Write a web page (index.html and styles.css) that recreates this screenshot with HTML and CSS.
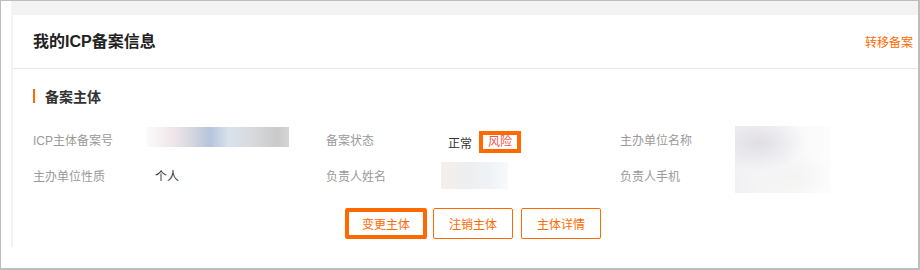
FILE: index.html
```html
<!DOCTYPE html>
<html lang="zh-CN">
<head>
<meta charset="utf-8">
<title>我的ICP备案信息</title>
<link rel="stylesheet" href="styles.css">
</head>
<body>
<div class="frame">
  <div class="panel">
    <div class="card">
      <div class="card-header">
        <h1 class="card-title">我的ICP备案信息</h1>
        <a class="header-link" href="#">转移备案</a>
      </div>
      <div class="card-body">
        <div class="section-title"><span class="section-bar"></span>备案主体</div>
        <div class="info-grid">
          <div class="label">ICP主体备案号</div>
          <div class="value"><div class="blur blur-a"></div></div>
          <div class="label">备案状态</div>
          <div class="value status"><span class="status-ok">正常</span><span class="status-risk">风险</span></div>
          <div class="label">主办单位名称</div>
          <div class="value tall"><div class="blur blur-c"></div></div>

          <div class="label">主办单位性质</div>
          <div class="value text">个人</div>
          <div class="label">负责人姓名</div>
          <div class="value"><div class="blur blur-b"></div></div>
          <div class="label">负责人手机</div>
        </div>
        <div class="actions">
          <button class="btn btn-focus">变更主体</button>
          <button class="btn">注销主体</button>
          <button class="btn">主体详情</button>
        </div>
      </div>
    </div>
  </div>
</div>
</body>
</html>
```

FILE: styles.css
```css
* { box-sizing: border-box; }
html, body { margin: 0; padding: 0; background: #fff; }
body {
  font-family: "Liberation Sans", "Noto Sans CJK SC", sans-serif;
  color: #333;
}
.frame {
  width: 920px;
  height: 270px;
  border: 1px solid #bdbdbd;
  border-right-width: 2px;
  border-bottom-width: 2px;
  padding-left: 10px;
  display: flex;
  align-items: flex-start;
}
.panel {
  flex: 1;
  height: 246px;
  background: #f3f3f3;
  padding: 14px 0 0 2px;
  display: flex;
}
.card {
  flex: 1;
  background: #fff;
  display: flex;
  flex-direction: column;
}
.card-header {
  height: 54px;
  border-bottom: 1px solid #e8e8e8;
  display: flex;
  align-items: center;
  justify-content: space-between;
  padding: 0 5px 0 20px;
}
.card-title {
  margin: 0;
  font-size: 16px;
  font-weight: bold;
  color: #222;
  line-height: 20px;
}
.header-link {
  font-size: 12px;
  color: #ff6a00;
  text-decoration: none;
}
.card-body {
  padding: 20px 5px 0 20px;
}
.section-title {
  display: flex;
  align-items: center;
  height: 14px;
  font-size: 14px;
  font-weight: bold;
  color: #333;
}
.section-bar {
  width: 2px;
  height: 14px;
  background: #ff6a00;
  margin-right: 10px;
}
.info-grid {
  margin-top: 18px;
  display: grid;
  grid-template-columns: 122px 171px 122px 172px 115px 1fr;
  grid-auto-rows: 36px;
  align-items: center;
  font-size: 12px;
}
.label { color: #9a9a9a; }
.value { color: #333; }
.blur { height: 20px; }
.blur-a {
  width: 143px;
  margin-left: -9px;
  margin-top: -4px;
  background: linear-gradient(90deg, #fbfbfb 0%, #eee5e8 20%, #cfd2de 35%, #b7c4dc 45%, #d9e2ec 58%, #d9dbde 72%, #cacaca 92%, #d6d6d6 100%);
}
.blur-b {
  width: 67px;
  height: 27px;
  margin-left: -7px;
  background: linear-gradient(90deg, #f4efea 0%, #eeeeef 40%, #eff2f5 70%, #f7f9fb 100%);
}
.value.tall {
  grid-row: span 2;
  align-self: start;
  margin-top: 5px;
}
.info-grid .label:nth-last-child(1) { grid-column: 5; }
.blur-c {
  width: 96px;
  height: 67px;
  background:
    radial-gradient(ellipse 70% 60% at 25% 25%, rgba(222,220,226,0.9), rgba(255,255,255,0) 70%),
    radial-gradient(ellipse 60% 50% at 60% 75%, rgba(244,243,242,0.9), rgba(255,255,255,0) 70%),
    linear-gradient(90deg, #f1f1f3, #fdfdfd);
}
.status {
  display: flex;
  align-items: center;
  padding-top: 6px;
}
.status-ok { color: #333; }
.status-risk {
  margin-left: 7px;
  border: 4px solid #ff6a00;
  padding: 0 5px;
  line-height: 14px;
  color: #f2554a;
}
.actions {
  margin-top: 15px;
  display: flex;
  justify-content: center;
}
.btn {
  width: 80px;
  height: 31px;
  border: 1px solid #ff6a00;
  border-radius: 2px;
  background: #fff;
  color: #ff6a00;
  font-family: inherit;
  font-size: 12px;
  padding: 0;
  margin-right: 8px;
}
.btn:last-child { margin-right: 0; }
.btn-focus {
  width: 82px;
  border-width: 4px;
  margin-right: 6px;
}
```
